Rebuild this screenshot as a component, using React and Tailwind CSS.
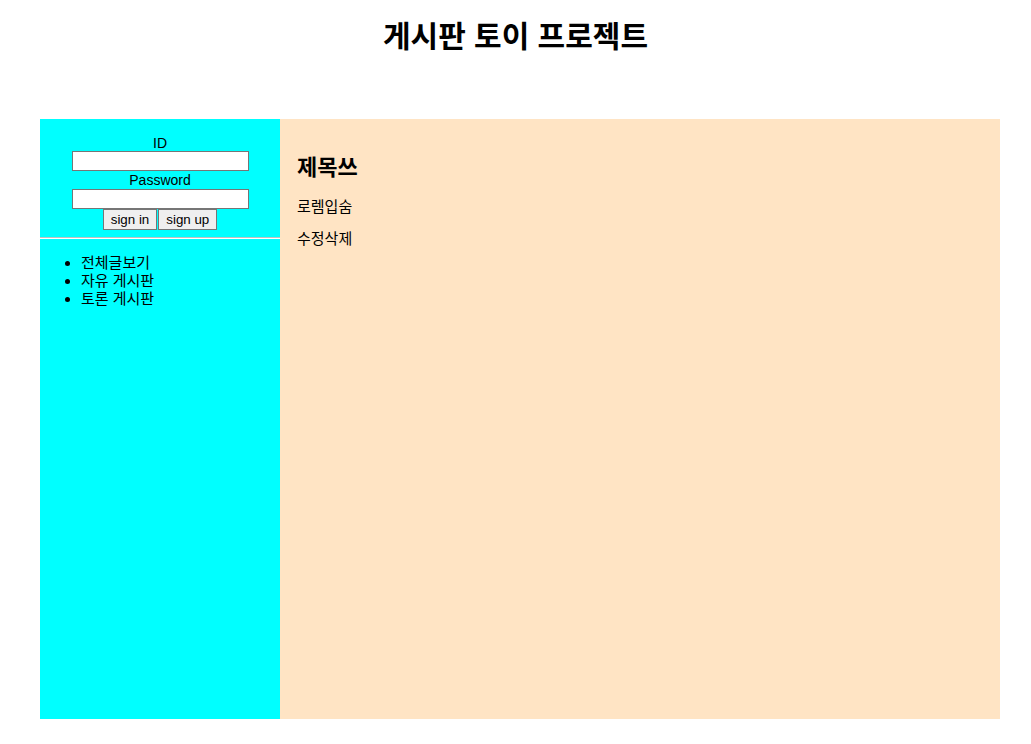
import React from 'react';

const font = { fontFamily: '"Liberation Sans", "Noto Sans CJK KR", sans-serif' };

const App = () => {
  return (
    <div className="min-h-[744px] bg-white text-black text-[14px]" style={font}>
      <h1 className="pt-[18px] text-center text-[30px] font-bold leading-[37px]">게시판 토이 프로젝트</h1>

      <div className="mx-[40px] mt-[64px] flex h-[600px] w-[960px]">
        <aside className="w-[240px] bg-[#00ffff]">
          <form className="flex flex-col items-center pt-[16px]">
            <label className="leading-[16px]">ID</label>
            <input type="text" className="h-[20px] w-[177px] border border-[#767676] bg-white" />
            <label className="mt-px leading-[17px]">Password</label>
            <input type="password" className="h-[20px] w-[177px] border border-[#767676] bg-white" />
            <div className="flex">
              <button type="button" className="h-[21px] border border-[#767676] bg-[#efefef] px-[7px] text-[13.33px] leading-[15px]">sign in</button>
              <button type="button" className="ml-px h-[21px] border border-[#767676] bg-[#efefef] px-[7px] text-[13.33px] leading-[15px]">sign up</button>
            </div>
          </form>
          <hr className="mt-[7px] border-t border-b border-t-[#c0c0c0] border-b-white" />
          <ul className="mt-[15px] list-disc pl-[41px] text-[15px] leading-[18px]">
            <li>전체글보기</li>
            <li>자유 게시판</li>
            <li>토론 게시판</li>
          </ul>
        </aside>

        <main className="flex-1 bg-[#ffe4c4] px-[17px] pt-[16px]">
          <h3 className="mt-[22px] text-[22px] font-bold leading-[22px]">제목쓰</h3>
          <p className="mt-[19px] text-[15px] leading-[18px]">로렘입숨</p>
          <p className="mt-[14px] text-[15px] leading-[18px]">수정삭제</p>
        </main>
      </div>
    </div>
  );
};

export default App;
